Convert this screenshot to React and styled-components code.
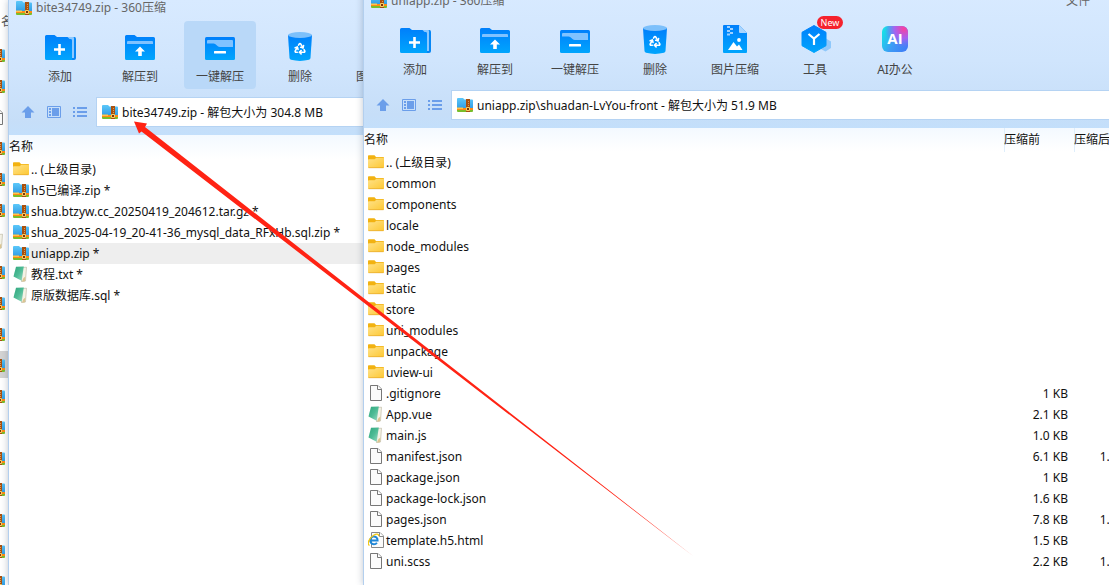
import React from "react";
import styled, { createGlobalStyle } from "styled-components";
import { Recycle } from "lucide-react";

const GlobalStyle = createGlobalStyle`
  * {
    box-sizing: border-box;
  }
  body {
    margin: 0;
    overflow: hidden;
    background: #fff;
    color: #111;
    font-family: "Noto Sans", "Noto Sans CJK SC", sans-serif;
    font-size: 12px;
  }
  button, input {
    font: inherit;
    color: inherit;
  }
  svg {
    display: block;
    flex: none;
  }
`;

const Desktop = styled.div`
  position: relative;
  display: grid;
  grid-template-columns: 8px 355fr 746fr;
  height: 100vh;
  overflow: hidden;
`;

const BackWindow = styled.aside`
  min-width: 0;
  overflow: hidden;
  background: #fff;
`;

const BackHeader = styled.div`
  height: 41px;
  padding: 13px 0 0 1px;
  line-height: 18px;
  color: #555;
  white-space: nowrap;
`;

const BackList = styled.div`
  display: flex;
  flex-direction: column;
  gap: 4px;
`;

const BackRow = styled.div`
  display: flex;
  justify-content: flex-end;
  height: 27px;
  padding: 4px 3px 0 0;
  background: ${(p) => (p.$active ? "#d4d4d4" : "transparent")};
`;

const Window = styled.section`
  min-width: 0;
  margin-top: ${(p) => (p.$raised ? "-7px" : "0")};
  overflow: hidden;
  background: #fff;
  border-left: 1px solid #b3cfee;
  box-shadow: 0 0 7px rgba(40, 60, 90, 0.3);
`;

const Chrome = styled.header`
  height: 135px;
  background: linear-gradient(#d8eaff, #d0e5fd 50%, #c6def8 90%, #c3dffb);
`;

const TitleBar = styled.div`
  display: flex;
  align-items: center;
  gap: 4px;
  height: 16px;
  margin-bottom: 5px;
  padding: 0 19px 0 7px;
  color: #666;
  line-height: 16px;
  white-space: nowrap;
`;

const Title = styled.h1`
  flex: 1;
  margin: 0;
  font-size: 12px;
  font-weight: 400;
`;

const Toolbar = styled.div`
  display: flex;
  gap: 8px;
  padding-left: 15px;
`;

const Tool = styled.button`
  position: relative;
  display: flex;
  flex: none;
  flex-direction: column;
  align-items: center;
  gap: 5px;
  width: 72px;
  height: 68px;
  padding: 10px 0 0;
  border: 0;
  border-radius: 4px;
  background: ${(p) => (p.$active ? "#b9d8f8" : "transparent")};
  color: #444;
  line-height: 18px;
  white-space: nowrap;
`;

const Badge = styled.span`
  position: absolute;
  top: 2px;
  left: 38px;
  width: 26px;
  height: 13px;
  border-radius: 7px;
  background: #f5222d;
  color: #fff;
  font-size: 9px;
  line-height: 13px;
  text-align: center;
`;

const AddressRow = styled.div`
  display: flex;
  align-items: center;
  padding: 8px 0 0 6px;
`;

const NavButton = styled.button`
  display: flex;
  flex: none;
  align-items: center;
  justify-content: center;
  width: 26px;
  height: 28px;
  padding: 0;
  border: 0;
  background: transparent;
  color: #6b9eea;
`;

const AddressBox = styled.label`
  display: flex;
  flex: 1;
  align-items: center;
  gap: 4px;
  height: 30px;
  margin-left: 3px;
  padding-left: 5px;
  border: 1px solid #b5d3f3;
  border-right: 0;
  background: #fff;
`;

const AddressInput = styled.input`
  flex: 1;
  min-width: 0;
  height: 26px;
  padding: 0;
  border: 0;
  outline: 0;
  background: transparent;
`;

const FileTable = styled.table`
  width: ${(p) => (p.$wide ? "calc(100% + 32px)" : "100%")};
  table-layout: fixed;
  border-collapse: collapse;
  white-space: nowrap;
`;

const HeadRow = styled.tr`
  height: 24px;
  background: linear-gradient(#f3f9ff, #fff);
`;

const HeadCell = styled.th`
  width: ${(p) => (p.$width ? `${p.$width}px` : "auto")};
  padding: 0;
  box-shadow: ${(p) => (p.$width ? "inset 1px 0 #deeefb" : "none")};
  font-weight: 400;
  line-height: 24px;
  text-align: left;
`;

const NameCell = styled.td`
  padding: 0 0 0 4px;
`;

const FileLine = styled.div`
  display: flex;
  height: 21px;
`;

const FileIcon = styled.span`
  display: flex;
  flex: none;
  align-items: center;
  height: 20px;
`;

const FileName = styled.span`
  flex: 1;
  padding-left: 2px;
  background: ${(p) => (p.$active ? "#eee" : "transparent")};
  line-height: 21px;
`;

const SizeCell = styled.td`
  padding: 0 6px 0 0;
  line-height: 21px;
  text-align: right;
`;

const Arrow = styled.svg`
  position: absolute;
  top: 121px;
  left: 134px;
  pointer-events: none;
`;

const HiddenDefs = styled.svg`
  position: absolute;
`;

const ZipIcon = () => (
  <svg width="16" height="14" viewBox="0 0 16 14">
    <path d="M0 1Q0 0 1 0H6L7.500 1.500H15Q16 1.500 16 2.500V11H0Z" fill="url(#zipBlue)" />
    <path d="M0 10H16V12H0Z" fill="#ff8a14" />
    <path d="M0 9.500H6V11H0Z" fill="#ffc54a" />
    <path d="M0 12H16V13Q16 14 15 14H1Q0 14 0 13Z" fill="#79bd2b" />
    <path d="M9 1H13V14H9Z" fill="#a8500f" />
    <path d="M11 3H12V4H11ZM11 5H12V6H11ZM11 7H12V8H11Z" fill="#dd9a55" />
    <rect x="9" y="9" width="4" height="4" rx="1" fill="#f7cf65" />
    <rect x="10" y="10" width="2" height="2" fill="#7a3408" />
  </svg>
);

const FolderIcon = () => (
  <svg width="16" height="14" viewBox="0 0 16 14">
    <path d="M0 1Q0 .3 .8 .3H6.500L8 2H15.200Q16 2 16 3V6H0Z" fill="#f2b211" />
    <path d="M0 5Q0 4.300 .8 4.300H6.600L8.300 2.800H15.300Q16 2.800 16 3.600V12.300Q16 13 15.200 13H.8Q0 13 0 12.300Z" fill="url(#folderYellow)" />
    <path d="M.5 12.700H15.500" stroke="#e5a92b" strokeWidth=".7" />
  </svg>
);

const NoteIcon = () => (
  <svg width="16" height="16" viewBox="0 0 16 16">
    <path d="M9 1.500L13.500 1.200L12.500 15L8.500 15.800Z" fill="#f4f2e6" stroke="#b9b49c" strokeWidth=".6" />
    <path d="M10.500 12L12.500 10.500L12 15.300L9 15.600Z" fill="#dcc591" />
    <path d="M3 .8L10.800 .4L8.600 14.800L.5 10.500Z" fill="url(#noteGreen)" />
  </svg>
);

const PageIcon = () => (
  <svg width="16" height="16" viewBox="0 0 16 16">
    <path d="M2.500 .5H10L13.500 4V15.500H2.500Z" fill="#fbfbfb" stroke="#777" />
    <path d="M9.500 .5V4.500H13.500" fill="#fff" stroke="#777" />
  </svg>
);

const HtmlIcon = () => (
  <svg width="16" height="16" viewBox="0 0 16 16">
    <path d="M3.500 .5H12L15.500 4V15.500H3.500Z" fill="#fbfbfb" stroke="#888" />
    <path d="M11.500 .5V4.500H15.500" fill="#fff" stroke="#888" />
    <path d="M2.500 8.600H9.600A3.700 3.900 0 1 0 8.900 10.700" fill="none" stroke="#1d86d8" strokeWidth="2" />
    <path d="M1.500 13.500C-1.500 12 1.500 5.500 6 3C8.500 1.700 11 1.800 10.600 4.200" fill="none" stroke="#f3c811" strokeWidth="1.300" />
  </svg>
);

const fileIcons = {
  zip: ZipIcon,
  folder: FolderIcon,
  note: NoteIcon,
  page: PageIcon,
  html: HtmlIcon,
};

const AddIcon = () => (
  <svg width="32" height="32" viewBox="0 0 32 32">
    <path d="M26 6H30.500Q32 6 32 8V27Q32 29 30 29H26Z" fill="#0787f5" />
    <path d="M23 6H29Q30 6 30 7V27H26V9H23Z" fill="#8cc8ff" />
    <path d="M1 5.500Q1 4 2.500 4H10.500L13 6H23.500L25.500 8H27Q28 8 28 9.500V29H2.500Q1 29 1 27.500Z" fill="url(#toolBlue)" />
    <path d="M10 18.500H21M15.500 13V24" stroke="#fff" strokeWidth="2.600" />
  </svg>
);

const ExtractIcon = () => (
  <svg width="32" height="32" viewBox="0 0 32 32">
    <path d="M1 5.500Q1 4 2.500 4H10.500L13 6H29.500Q31 6 31 7.500V27.500Q31 29 29.500 29H2.500Q1 29 1 27.500Z" fill="url(#toolBlue)" />
    <path d="M3 13V11Q3 10 4 10H28Q29 10 29 11V13Z" fill="#80c2ff" />
    <path d="M16 15.500L21 20.500H17.800V25H14.200V20.500H11Z" fill="#fff" />
  </svg>
);

const OneClickIcon = () => (
  <svg width="32" height="32" viewBox="0 0 32 32">
    <rect x="1" y="6" width="30" height="23" rx="1.500" fill="url(#toolBlue)" />
    <path d="M3 12.500V10Q3 9 4 9H28Q29 9 29 10V16H16Q14.500 16 13.500 15L11.500 13.300Q10.500 12.500 9.500 12.500Z" fill="#80c2ff" />
    <rect x="10" y="20" width="12" height="2.600" rx=".5" fill="#fff" />
  </svg>
);

const DeleteIcon = () => (
  <svg width="32" height="32" viewBox="0 0 32 32">
    <path d="M4 4H28L26.500 27Q26.400 28.300 25 28.800Q16 31 7 28.800Q5.600 28.300 5.500 27Z" fill="url(#toolBlue)" />
    <ellipse cx="16" cy="4" rx="12" ry="3" fill="#7cc0fb" />
    <Recycle x="9.500" y="11" width="13" height="13" color="#fff" strokeWidth={3} />
  </svg>
);

const ImageIcon = () => (
  <svg width="32" height="32" viewBox="0 0 32 32">
    <path d="M4 2Q4 1 5 1H20L28 9V28Q28 29 27 29H5Q4 29 4 28Z" fill="url(#toolBlue)" />
    <path d="M20 1L28 9H21Q20 9 20 8Z" fill="#a9d5ff" />
    <path d="M8 2H11V4H8ZM11 4H14V6H11ZM8 6H11V8H8ZM11 8H14V10H11ZM8 9.500H11V11.500H8Z" fill="#9fd0ff" />
    <circle cx="20" cy="16" r="1.900" fill="#fff" />
    <path d="M9 26L14.500 18L18 22.500L20 20.500L23.500 26Z" fill="#fff" />
  </svg>
);

const ToolsIcon = () => (
  <svg width="32" height="32" viewBox="0 0 32 32">
    <path d="M27 14.500L32 17.500V24L26.500 27.500L21 24.500V17.500Z" fill="#8fc8fb" />
    <path d="M15 1.500L27 8.300V21.700L15 28.500L3 21.700V8.300Z" fill="url(#toolBlue)" stroke="url(#toolBlue)" strokeLinejoin="round" />
    <path d="M9.500 10L15 14.500L20.500 10M15 14.500V21" fill="none" stroke="#fff" strokeWidth="2.200" />
  </svg>
);

const AiIcon = () => (
  <svg width="32" height="32" viewBox="0 0 32 32">
    <rect x="3" y="2" width="26" height="26" rx="6" fill="url(#aiBase)" />
    <rect x="3" y="2" width="26" height="26" rx="6" fill="url(#aiPink)" />
    <text x="16" y="20" fill="#fff" fontSize="15" fontWeight="700" fontFamily="Open Sans, sans-serif" textAnchor="middle">
      AI
    </text>
  </svg>
);

const tools = [
  { label: "添加", icon: AddIcon },
  { label: "解压到", icon: ExtractIcon },
  { label: "一键解压", icon: OneClickIcon },
  { label: "删除", icon: DeleteIcon },
  { label: "图片压缩", icon: ImageIcon },
  { label: "工具", icon: ToolsIcon, badge: "New" },
  { label: "AI办公", icon: AiIcon },
];

const leftFiles = [
  { name: ".. (上级目录)", type: "folder" },
  { name: "h5已编译.zip *", type: "zip" },
  { name: "shua.btzyw.cc_20250419_204612.tar.gz *", type: "zip" },
  { name: "shua_2025-04-19_20-41-36_mysql_data_RFxHb.sql.zip *", type: "zip" },
  { name: "uniapp.zip *", type: "zip", active: true },
  { name: "教程.txt *", type: "note" },
  { name: "原版数据库.sql *", type: "note" },
];

const rightFiles = [
  { name: ".. (上级目录)", type: "folder" },
  { name: "common", type: "folder" },
  { name: "components", type: "folder" },
  { name: "locale", type: "folder" },
  { name: "node_modules", type: "folder" },
  { name: "pages", type: "folder" },
  { name: "static", type: "folder" },
  { name: "store", type: "folder" },
  { name: "uni_modules", type: "folder" },
  { name: "unpackage", type: "folder" },
  { name: "uview-ui", type: "folder" },
  { name: ".gitignore", type: "page", size: "1 KB" },
  { name: "App.vue", type: "note", size: "2.1 KB" },
  { name: "main.js", type: "note", size: "1.0 KB" },
  { name: "manifest.json", type: "page", size: "6.1 KB", packed: "1.8 KB" },
  { name: "package.json", type: "page", size: "1 KB" },
  { name: "package-lock.json", type: "page", size: "1.6 KB" },
  { name: "pages.json", type: "page", size: "7.8 KB", packed: "1.5 KB" },
  { name: "template.h5.html", type: "html", size: "1.5 KB" },
  { name: "uni.scss", type: "page", size: "2.2 KB", packed: "1.0 KB" },
];

const backFiles = [
  "zip", "zip", "page", "zip", "zip", "zip", "note", "zip", "zip",
  "zip", "zip", "zip", "zip", "zip", "zip", "zip", "zip", "zip",
];

// shared gradients for all the icons
const Gradients = () => (
  <HiddenDefs width="0" height="0" aria-hidden="true">
    <defs>
      <linearGradient id="zipBlue" x1="0" y1="0" x2="0" y2="1">
        <stop offset="0" stopColor="#5cc8fa" />
        <stop offset="1" stopColor="#2f9ae3" />
      </linearGradient>
      <linearGradient id="folderYellow" x1="0" y1="0" x2="1" y2="1">
        <stop offset="0" stopColor="#ffe28a" />
        <stop offset="1" stopColor="#fdc833" />
      </linearGradient>
      <linearGradient id="noteGreen" x1="0" y1="0" x2="1" y2="1">
        <stop offset="0" stopColor="#2fa67c" />
        <stop offset=".5" stopColor="#4dbb95" />
        <stop offset="1" stopColor="#9edcc6" />
      </linearGradient>
      <linearGradient id="toolBlue" x1="0" y1="0" x2="0" y2="1">
        <stop offset="0" stopColor="#007ffb" />
        <stop offset="1" stopColor="#00a5fd" />
      </linearGradient>
      <linearGradient id="aiBase" x1="0" y1=".3" x2="1" y2=".8">
        <stop offset="0" stopColor="#17dfe8" />
        <stop offset=".5" stopColor="#3d9bf5" />
        <stop offset="1" stopColor="#3f7df7" />
      </linearGradient>
      <radialGradient id="aiPink" cx=".85" cy=".1" r=".75">
        <stop offset="0" stopColor="#fb3f9d" />
        <stop offset=".5" stopColor="#b05cf0" stopOpacity=".9" />
        <stop offset="1" stopColor="#7a6cf5" stopOpacity="0" />
      </radialGradient>
    </defs>
  </HiddenDefs>
);

const ArchiveWindow = ({ title, address, files, activeTool, menu, raised, wide }) => (
  <Window $raised={raised}>
    <Chrome>
      <TitleBar>
        <ZipIcon />
        <Title>{title}</Title>
        {menu && <span>{menu}</span>}
      </TitleBar>
      <Toolbar>
        {tools.map(({ label, icon: Icon, badge }) => (
          <Tool key={label} type="button" $active={label === activeTool}>
            <Icon />
            {label}
            {badge && <Badge>{badge}</Badge>}
          </Tool>
        ))}
      </Toolbar>
      <AddressRow>
        <NavButton type="button" aria-label="向上">
          <svg width="14" height="12" viewBox="0 0 14 12">
            <path d="M7 0L13.500 6.500H10V12H4V6.500H.5Z" fill="currentColor" />
          </svg>
        </NavButton>
        <NavButton type="button" aria-label="预览">
          <svg width="14" height="12" viewBox="0 0 14 12">
            <path d="M.5 .5H13.500V11.500H.5Z" fill="none" stroke="currentColor" />
            <path d="M5 2H12V10H5ZM2 2H4V4H2ZM2 5H4V7H2ZM2 8H4V10H2Z" fill="currentColor" />
          </svg>
        </NavButton>
        <NavButton type="button" aria-label="列表">
          <svg width="14" height="12" viewBox="0 0 14 12">
            <path d="M0 1H2V3H0ZM4 1H14V3H4ZM0 5H2V7H0ZM4 5H14V7H4ZM0 9H2V11H0ZM4 9H14V11H4Z" fill="currentColor" />
          </svg>
        </NavButton>
        <AddressBox>
          <ZipIcon />
          <AddressInput type="text" aria-label="地址" defaultValue={address} />
        </AddressBox>
      </AddressRow>
    </Chrome>
    <FileTable $wide={wide}>
      <thead>
        <HeadRow>
          <HeadCell>名称</HeadCell>
          {wide && <HeadCell $width={70}>压缩前</HeadCell>}
          {wide && <HeadCell $width={67}>压缩后</HeadCell>}
        </HeadRow>
      </thead>
      <tbody>
        {files.map((file) => {
          const Icon = fileIcons[file.type];
          return (
            <tr key={file.name}>
              <NameCell>
                <FileLine>
                  <FileIcon>
                    <Icon />
                  </FileIcon>
                  <FileName $active={file.active}>{file.name}</FileName>
                </FileLine>
              </NameCell>
              {wide && <SizeCell>{file.size}</SizeCell>}
              {wide && <SizeCell>{file.packed}</SizeCell>}
            </tr>
          );
        })}
      </tbody>
    </FileTable>
  </Window>
);

const App = () => {
  return (
    <>
      <GlobalStyle />
      <Gradients />
      <Desktop>
        <BackWindow>
          <BackHeader>名称</BackHeader>
          <BackList>
            {backFiles.map((type, i) => {
              const Icon = fileIcons[type];
              return (
                <BackRow key={i} $active={i === 10}>
                  <FileIcon>
                    <Icon />
                  </FileIcon>
                </BackRow>
              );
            })}
          </BackList>
        </BackWindow>
        <ArchiveWindow
          title="bite34749.zip - 360压缩"
          address="bite34749.zip - 解包大小为 304.8 MB"
          files={leftFiles}
          activeTool="一键解压"
        />
        <ArchiveWindow
          title="uniapp.zip - 360压缩"
          address="uniapp.zip\shuadan-LvYou-front - 解包大小为 51.9 MB"
          files={rightFiles}
          menu="文件"
          raised
          wide
        />
        <Arrow width="560" height="436" viewBox="0 0 560 436">
          <path d="M0 .5L13 2.500L11 6L559 435L7.500 10.500L5 12.500Z" fill="#ff2314" />
        </Arrow>
      </Desktop>
    </>
  );
};

export default App;
